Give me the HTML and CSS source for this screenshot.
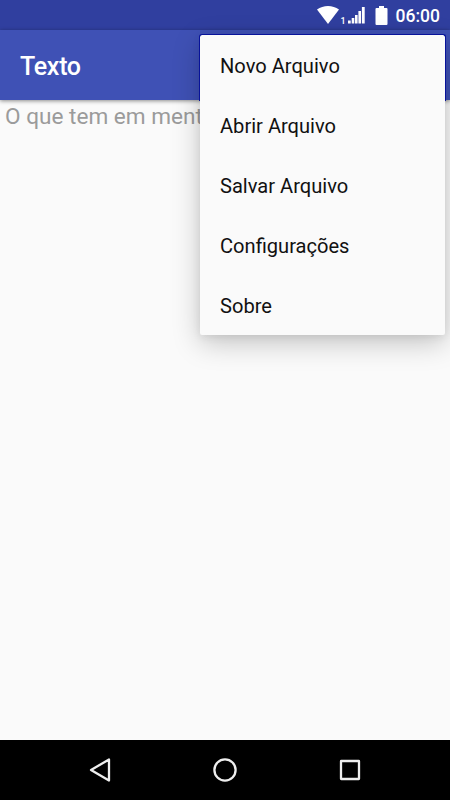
FILE: index.html
```html
<!DOCTYPE html>
<html lang="pt-BR">
<head>
<meta charset="utf-8">
<title>Texto</title>
<link rel="stylesheet" href="styles.css">
</head>
<body>
<div class="screen">
  <header class="status-bar">
    <svg class="wifi" viewBox="0 0 22 18"><path d="M0 3.6C6.3-1.2 15.7-1.2 22 3.6L11 18Z"/></svg>
    <span class="sim">1</span>
    <svg class="signal" viewBox="0 0 17 18"><path d="M0 14.5h2.7v3H0zM3.7 12h2.6v5.5H3.7zM7 9h2.6v8.5H7zM10.4 5h2.6v12.5h-2.6zM13.9 1h2.8v16.5h-2.8z"/></svg>
    <svg class="battery" viewBox="0 0 13 19"><path d="M4 0h5v2h2.5q1 0 1 1v15q0 1-1 1h-10q-1 0-1-1V3q0-1 1-1H4z"/></svg>
    <time class="clock">06:00</time>
  </header>
  <div class="app-bar"><h1 class="title">Texto</h1></div>
  <main class="editor">O que tem em mente?</main>
  <ul class="menu">
    <li>Novo Arquivo</li>
    <li>Abrir Arquivo</li>
    <li>Salvar Arquivo</li>
    <li>Configurações</li>
    <li>Sobre</li>
  </ul>
  <nav class="nav-bar">
    <svg viewBox="0 0 30 30"><path d="M24 4.5v21L6 15Z"/></svg>
    <svg viewBox="0 0 30 30"><circle cx="15" cy="15" r="10.6"/></svg>
    <svg viewBox="0 0 30 30"><rect x="6" y="6" width="18" height="18" rx=".3"/></svg>
  </nav>
</div>
</body>
</html>
```

FILE: styles.css
```css
* {
  box-sizing: border-box;
}

body {
  margin: 0;
  font-family: Roboto, sans-serif;
}

.screen {
  position: relative;
  display: flex;
  flex-direction: column;
  width: 450px;
  height: 800px;
  overflow: hidden;
  background: #fafafa;
}

.status-bar {
  display: flex;
  align-items: center;
  justify-content: flex-end;
  height: 30px;
  padding-right: 10px;
  background: #303f9f;
  color: #fff;
}

.status-bar svg {
  fill: #fff;
}

.wifi {
  width: 22px;
  height: 18px;
}

.sim {
  width: 5px;
  margin: 11px 2px 0;
  font-size: 9px;
  font-weight: 500;
  line-height: 10px;
}

.signal {
  width: 17px;
  height: 18px;
}

.battery {
  width: 13px;
  height: 19px;
  margin: 0 8px 0 10px;
}

.clock {
  font-size: 17.5px;
  font-weight: 500;
  line-height: 20px;
  margin-top: 2px;
}

.app-bar {
  z-index: 1;
  display: flex;
  align-items: center;
  height: 70px;
  padding: 3px 20px 0;
  background: #3f51b5;
  box-shadow: 0 1px 4px rgba(0, 0, 0, .45);
}

.title {
  margin: 0;
  color: #fff;
  font-size: 25px;
  font-weight: 500;
  letter-spacing: -.3px;
}

.editor {
  flex: 1;
  padding: 3px 5px;
  color: #9b9b9b;
  font-size: 22.6px;
  line-height: 28px;
}

.menu {
  position: absolute;
  z-index: 2;
  top: 35px;
  right: 5px;
  width: 245px;
  margin: 0;
  padding: 0;
  list-style: none;
  background: #fafafa;
  border-radius: 2px;
  box-shadow: 0 8px 28px rgba(0, 0, 0, .22), 0 2px 8px rgba(0, 0, 0, .08);
}

/* Dark rim where the menu overlaps the app bar */
.menu::before {
  content: "";
  position: absolute;
  z-index: -1;
  inset: -1px -1px auto;
  height: 66px;
  border: 1px solid #07129a;
  border-bottom: 0;
  border-radius: 3px 3px 0 0;
}

.menu li {
  display: flex;
  align-items: center;
  height: 60px;
  padding: 1px 20px 0;
  color: #111;
  font-size: 20.1px;
}

.nav-bar {
  display: flex;
  align-items: center;
  justify-content: center;
  gap: 95px;
  height: 60px;
  background: #000;
}

.nav-bar svg {
  width: 30px;
  height: 30px;
  fill: none;
  stroke: #eee;
  stroke-width: 2.3;
  stroke-linejoin: round;
}
```
